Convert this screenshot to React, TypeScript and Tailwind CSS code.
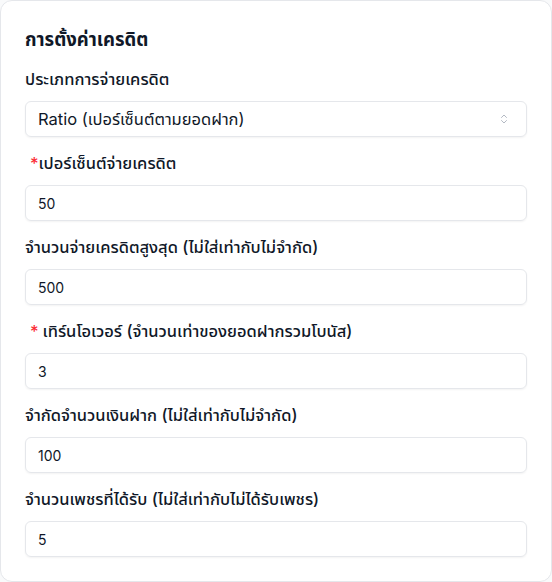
import { ChevronsUpDown } from "lucide-react";

const fields = [
  { label: "เปอร์เซ็นต์จ่ายเครดิต", value: "50", required: true, gap: false },
  { label: "จำนวนจ่ายเครดิตสูงสุด (ไม่ใส่เท่ากับไม่จำกัด)", value: "500" },
  { label: "เทิร์นโอเวอร์ (จำนวนเท่าของยอดฝากรวมโบนัส)", value: "3", required: true, gap: true },
  { label: "จำกัดจำนวนเงินฝาก (ไม่ใส่เท่ากับไม่จำกัด)", value: "100" },
  { label: "จำนวนเพชรที่ได้รับ (ไม่ใส่เท่ากับไม่ได้รับเพชร)", value: "5" },
];

export default function App() {
  return (
    <div className="min-h-screen bg-gray-50 font-['Inter','Noto_Sans','Noto_Sans_Thai',sans-serif] text-gray-900">
      <div className="w-[552px] h-[582px] bg-white border border-gray-200 rounded-xl px-6 pt-6 pb-6">
        <h2 className="text-[18.5px] leading-7 font-bold mb-4">การตั้งค่าเครดิต</h2>

        {/* ประเภท */}
        <div className="mb-4">
          <label className="block text-[16.5px] leading-5 font-medium">ประเภทการจ่ายเครดิต</label>
          <div className="mt-3 h-9 flex items-center justify-between pl-3 pr-4 border border-gray-200 rounded-md shadow-xs text-[16.5px]">
            <span>Ratio (เปอร์เซ็นต์ตามยอดฝาก)</span>
            <ChevronsUpDown className="w-3 h-3 text-gray-400" strokeWidth={1.5} />
          </div>
        </div>

        <div className="flex flex-col gap-4">
          {fields.map((f) => (
            <div key={f.label}>
              <label className="block text-[16.5px] leading-5 font-medium">
                {f.required && (
                  <span className={`text-red-500 ml-[5px] ${f.gap ? "mr-1" : ""}`}>*</span>
                )}
                {f.label}
              </label>
              <input
                readOnly
                value={f.value}
                className="mt-3 w-full h-9 px-3 border border-gray-200 rounded-md shadow-xs text-sm outline-none"
              />
            </div>
          ))}
        </div>
      </div>
    </div>
  );
}
